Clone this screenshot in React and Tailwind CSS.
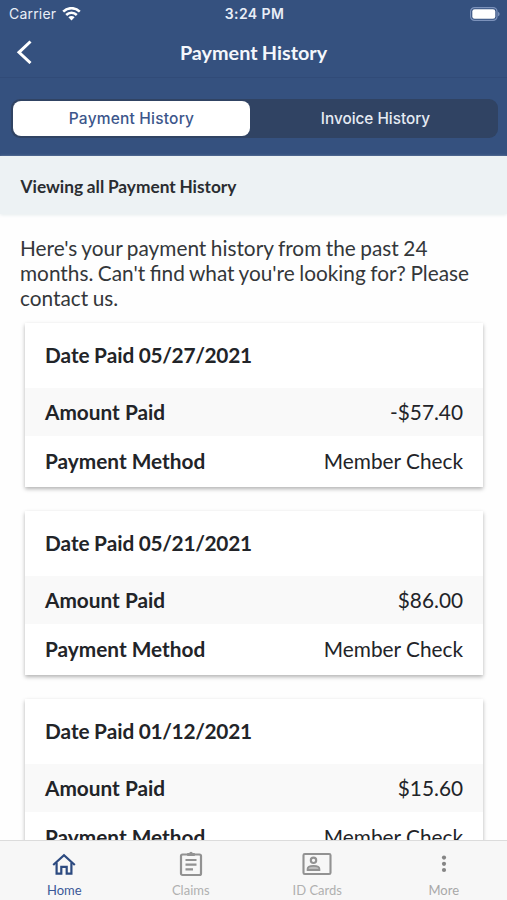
const payments = [
  { date: '05/27/2021', amount: '-$57.40', method: 'Member Check' },
  { date: '05/21/2021', amount: '$86.00', method: 'Member Check' },
  { date: '01/12/2021', amount: '$15.60', method: 'Member Check' },
];

function StatusBar() {
  return (
    <div className="grid h-[27px] grid-cols-3 items-center pl-[9px] pr-[7px] font-['Inter',sans-serif] text-[14px] text-[#e9eef7]">
      <div className="flex items-center gap-[6px]">
        <span className="text-[14px] tracking-[0.2px]">Carrier</span>
        <svg className="h-[14px] w-[19px]" viewBox="0 0 19 14" fill="none" stroke="#ffffff" strokeWidth="2.5">
          <path d="M1.2 4.6a11.7 11.7 0 0 1 16.6 0" />
          <path d="M4.2 8a7.5 7.5 0 0 1 10.6 0" />
          <path d="M9.5 13.4 6.4 10.3a4.4 4.4 0 0 1 6.2 0z" fill="#ffffff" stroke="none" />
        </svg>
      </div>
      <span className="text-center text-[14px] font-semibold tracking-[0.4px]">3:24 PM</span>
      <svg className="h-[14px] w-[30px] justify-self-end" viewBox="0 0 30 14">
        <rect x="0.6" y="0.6" width="26.4" height="12.8" rx="4" fill="none" stroke="#7c92bb" strokeWidth="1.2" />
        <rect x="2.3" y="2.3" width="23" height="9.4" rx="2.3" fill="#ffffff" />
        <path d="M28.2 4.7C30 5.5 30 8.5 28.2 9.3z" fill="#8ba0c5" />
      </svg>
    </div>
  );
}

function PaymentCard({ date, amount, method }) {
  return (
    <section className="h-[164px] shrink-0 bg-white text-[20.8px] leading-[26px] text-[#222428] shadow-[0_2px_4px_rgba(0,0,0,0.3)]">
      <h2 className="flex h-[65px] items-center px-5 pb-[2px] font-bold">
        <span className="[word-spacing:-0.7px]">
          Date Paid <span className="tracking-[-0.28px]">{date}</span>
        </span>
      </h2>
      <div className="flex h-12 items-center justify-between bg-[#f9f9f9] px-5">
        <span className="font-bold">Amount Paid</span>
        <span>{amount}</span>
      </div>
      <div className="flex h-[51px] items-center justify-between px-5 pb-px">
        <span className="font-bold">Payment Method</span>
        <span>{method}</span>
      </div>
    </section>
  );
}

function HomeIcon() {
  return (
    <svg className="h-6 w-6" viewBox="0 0 24 24" fill="none" stroke="#2c4a80" strokeWidth="2.2">
      <path d="M1.2 13 12 3.2 22.800 13" />
      <path d="M4.6 10.5V21.7H9.3V14.800H14.700V21.700H19.400V10.500" />
    </svg>
  );
}

function ClaimsIcon() {
  return (
    <svg className="h-[26px] w-6" viewBox="0 0 24 26" fill="none" stroke="#929292" strokeWidth="2.2">
      <rect x="2" y="3.5" width="20" height="20.5" rx="1.5" />
      <path d="M8.5 4.5V2.5h1.800a1.800 1.800 0 0 1 3.400 0h1.800v2z" fill="#929292" strokeWidth="1" />
      <path d="M6.5 9h11M6.5 13.7h11M6.5 18.4h7.5" />
    </svg>
  );
}

function CardIcon() {
  return (
    <svg className="h-6 w-[30px]" viewBox="0 0 30 24" fill="none" stroke="#929292" strokeWidth="2.1">
      <rect x="1.5" y="2" width="27" height="20" rx="1.3" />
      <circle cx="11.5" cy="8.3" r="2.7" />
      <path d="M5.6 18v-1c0-4.3 11.800-4.300 11.800 0v1z" fill="#bdbdbd" strokeWidth="1.8" />
    </svg>
  );
}

function MoreIcon() {
  return (
    <svg className="h-6 w-6" viewBox="0 0 24 24" fill="#858585">
      <circle cx="12" cy="5.6" r="2.1" />
      <circle cx="12" cy="11.8" r="2.1" />
      <circle cx="12" cy="18" r="2.1" />
    </svg>
  );
}

const tabs = [
  { label: 'Home', Icon: HomeIcon, color: 'text-[#3b5998]' },
  { label: 'Claims', Icon: ClaimsIcon, color: 'text-[#b0b0b0]' },
  { label: 'ID Cards', Icon: CardIcon, color: 'text-[#b0b0b0]' },
  { label: 'More', Icon: MoreIcon, color: 'text-[#a8a8a8]' },
];

export default function App() {
  return (
    <div className="flex h-[900px] w-[507px] flex-col overflow-hidden bg-[#fefefe] font-['Lato',sans-serif]">
      <header className="h-[156px] shrink-0 bg-[#35517f]">
        <StatusBar />
        <div className="grid h-[51px] grid-cols-[60px_1fr_60px] items-center border-b border-[#314b78]">
          <svg className="ml-4 h-6 w-4" viewBox="0 0 16 24" fill="none" stroke="#ffffff" strokeWidth="3">
            <path d="M14.5 1.5 3 12.3 14.5 23" />
          </svg>
          <h1 className="pt-px text-center text-[19.8px] font-bold text-[#f4f7fc] [word-spacing:-0.5px]">Payment History</h1>
        </div>
        <div className="ml-[11px] mr-[9px] mt-[21px] flex h-[39px] rounded-[9px] bg-[#304363] p-[2px] font-['Inter',sans-serif] font-medium">
          <div className="flex w-[237px] items-center justify-center rounded-[8px] bg-white text-[15.5px] tracking-[0.2px] text-[#3c568b]">Payment History</div>
          <div className="flex flex-1 items-center justify-center pl-[5px] pt-px text-[15.3px] text-[#e6ebf3]">Invoice History</div>
        </div>
      </header>
      <div className="flex h-[58px] shrink-0 items-center bg-[#edf2f4] pl-[20.5px] pt-[3px] text-[17.3px] font-bold text-[#2a2d31] shadow-[0_1px_3px_rgba(225,232,235,0.8)] [word-spacing:-0.5px]">
        Viewing all Payment History
      </div>
      <main className="flex min-h-0 flex-1 flex-col overflow-hidden">
        <p className="mt-[21px] shrink-0 whitespace-nowrap pl-[20px] text-[20.8px] leading-[25px] text-[#34373a] [word-spacing:-0.8px]">
          Here's your payment history from the past 24
          <br />
          months. Can't find what you're looking for? Please
          <br />
          contact us.
        </p>
        <div className="ml-[25px] mt-[13px] flex w-[458px] shrink-0 flex-col gap-6">
          {payments.map((payment) => (
            <PaymentCard key={payment.date} {...payment} />
          ))}
        </div>
      </main>
      <nav className="z-10 grid h-[60px] shrink-0 grid-cols-4 border-t border-[#dcdcdc] bg-[#f7f7f7] pl-px">
        {tabs.map(({ label, Icon, color }) => (
          <div key={label} className="flex flex-col items-center">
            <div className="flex h-[46px] items-center">
              <Icon />
            </div>
            <span className={`-mt-[5px] text-[13px] leading-4 ${color}`}>{label}</span>
          </div>
        ))}
      </nav>
    </div>
  );
}
